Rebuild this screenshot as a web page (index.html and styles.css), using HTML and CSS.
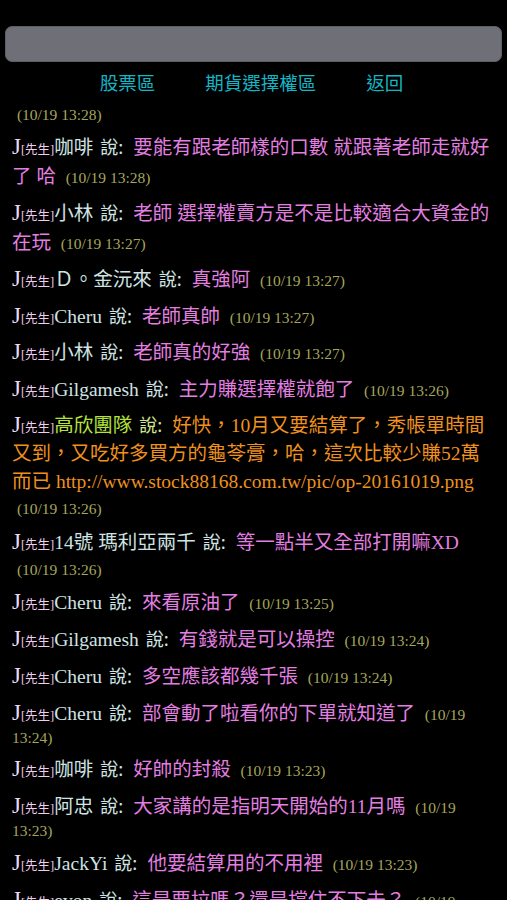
FILE: index.html
```html
<!DOCTYPE html>
<html lang="zh-Hant">
<head>
<meta charset="utf-8">
<title>聊天室</title>
<link rel="stylesheet" href="styles.css">
</head>
<body>
<div class="top"><div class="input"></div></div>
<nav class="nav"><a href="#">股票區</a><a href="#">期貨選擇權區</a><a href="#">返回</a></nav>
<div class="chat">
  <div class="msg"><span class="pad">&nbsp;</span><span class="time">(10/19 13:28)</span></div>
  <div class="msg"><span class="j">J</span><span class="title">[先生]</span><span class="name">咖啡</span><span class="say">說:</span><span class="text">要能有跟老師樣的口數 就跟著老師走就好了 哈 </span><span class="pad">&nbsp;</span><span class="time">(10/19 13:28)</span></div>
  <div class="msg"><span class="j">J</span><span class="title">[先生]</span><span class="name">小林</span><span class="say">說:</span><span class="text">老師 選擇權賣方是不是比較適合大資金的在玩 </span><span class="pad">&nbsp;</span><span class="time">(10/19 13:27)</span></div>
  <div class="msg"><span class="j">J</span><span class="title">[先生]</span><span class="name">Ｄ。金沅來</span><span class="say">說:</span><span class="text">真強阿 </span><span class="pad">&nbsp;</span><span class="time">(10/19 13:27)</span></div>
  <div class="msg"><span class="j">J</span><span class="title">[先生]</span><span class="name">Cheru</span><span class="say">說:</span><span class="text">老師真帥 </span><span class="pad">&nbsp;</span><span class="time">(10/19 13:27)</span></div>
  <div class="msg"><span class="j">J</span><span class="title">[先生]</span><span class="name">小林</span><span class="say">說:</span><span class="text">老師真的好強 </span><span class="pad">&nbsp;</span><span class="time">(10/19 13:27)</span></div>
  <div class="msg"><span class="j">J</span><span class="title">[先生]</span><span class="name">Gilgamesh</span><span class="say">說:</span><span class="text">主力賺選擇權就飽了 </span><span class="pad">&nbsp;</span><span class="time">(10/19 13:26)</span></div>
  <div class="msg"><span class="j">J</span><span class="title">[先生]</span><span class="name lime">高欣團隊</span><span class="say lime">說:</span><span class="text orange">好快，10月又要結算了，秀帳單時間又到，又吃好多買方的龜苓膏，哈，這次比較少賺52萬而已 http://www.stock88168.com.tw/pic/op-20161019.png </span><span class="pad">&nbsp;</span><span class="time">(10/19 13:26)</span></div>
  <div class="msg"><span class="j">J</span><span class="title">[先生]</span><span class="name">14號 瑪利亞兩千</span><span class="say">說:</span><span class="text">等一點半又全部打開嘛XD </span><span class="pad">&nbsp;</span><span class="time">(10/19 13:26)</span></div>
  <div class="msg"><span class="j">J</span><span class="title">[先生]</span><span class="name">Cheru</span><span class="say">說:</span><span class="text">來看原油了 </span><span class="pad">&nbsp;</span><span class="time">(10/19 13:25)</span></div>
  <div class="msg"><span class="j">J</span><span class="title">[先生]</span><span class="name">Gilgamesh</span><span class="say">說:</span><span class="text">有錢就是可以操控 </span><span class="pad">&nbsp;</span><span class="time">(10/19 13:24)</span></div>
  <div class="msg"><span class="j">J</span><span class="title">[先生]</span><span class="name">Cheru</span><span class="say">說:</span><span class="text">多空應該都幾千張 </span><span class="pad">&nbsp;</span><span class="time">(10/19 13:24)</span></div>
  <div class="msg"><span class="j">J</span><span class="title">[先生]</span><span class="name">Cheru</span><span class="say">說:</span><span class="text">部會動了啦看你的下單就知道了 </span><span class="pad">&nbsp;</span><span class="time">(10/19 13:24)</span></div>
  <div class="msg"><span class="j">J</span><span class="title">[先生]</span><span class="name">咖啡</span><span class="say">說:</span><span class="text">好帥的封殺 </span><span class="pad">&nbsp;</span><span class="time">(10/19 13:23)</span></div>
  <div class="msg"><span class="j">J</span><span class="title">[先生]</span><span class="name">阿忠</span><span class="say">說:</span><span class="text">大家講的是指明天開始的11月嗎 </span><span class="pad">&nbsp;</span><span class="time">(10/19 13:23)</span></div>
  <div class="msg"><span class="j">J</span><span class="title">[先生]</span><span class="name">JackYi</span><span class="say">說:</span><span class="text">他要結算用的不用裡 </span><span class="pad">&nbsp;</span><span class="time">(10/19 13:23)</span></div>
  <div class="msg"><span class="j">J</span><span class="title">[先生]</span><span class="name">evon</span><span class="say">說:</span><span class="text">這是要拉嗎？還是撐住不下去？ </span><span class="pad">&nbsp;</span><span class="time">(10/19 13:22)</span></div>
  <div class="msg"><span class="j">J</span><span class="title">[先生]</span><span class="name">小林</span><span class="say">說:</span><span class="text">老師好 </span><span class="pad">&nbsp;</span><span class="time">(10/19 13:22)</span></div>
</div>
</body>
</html>
```

FILE: styles.css
```css
html, body {
  margin: 0;
  padding: 0;
  background: #000;
}

body {
  font-family: "Liberation Serif", "Noto Sans CJK TC", serif;
  color: #cfe3e3;
}

.top {
  padding: 26px 5px 0;
}

.input {
  height: 36px;
  box-sizing: border-box;
  background: #6f7077;
  border: 1px solid #5d5e64;
  border-radius: 7px;
}

.nav {
  display: flex;
  justify-content: center;
  gap: 50px;
  margin-top: 6.5px;
  padding-right: 4px;
  height: 26px;
  line-height: 26px;
  font-family: "Noto Sans CJK TC", sans-serif;
  font-size: 18.5px;
}

.nav a {
  color: #14b5c5;
  text-decoration: none;
}

.chat {
  padding: 7px 9px 0 12px;
}

.msg {
  font-size: 15.5px;
  line-height: 20px;
  margin-bottom: 7.75px;
}

.j {
  font-size: 23px;
  line-height: 20px;
  color: #e8dcf8;
}

.title {
  font-size: 12.5px;
  color: #f2cdef;
}

.name {
  font-size: 19.5px;
  color: #cfe3e3;
}

.name.lime {
  color: #b3e23a;
}

.say {
  font-family: "Noto Sans CJK TC", sans-serif;
  font-size: 18px;
  color: #cfe3e3;
  margin-left: 7px;
  margin-right: 10px;
}

.say.lime {
  color: #cfe591;
}

.text {
  font-size: 19.5px;
  line-height: 29px;
  color: #e27fe0;
}

.text.orange {
  color: #ee911f;
  line-height: 28px;
}

.pad {
  font-size: 19.5px;
  line-height: 24px;
}

.time {
  color: #a6a65b;
}
```
